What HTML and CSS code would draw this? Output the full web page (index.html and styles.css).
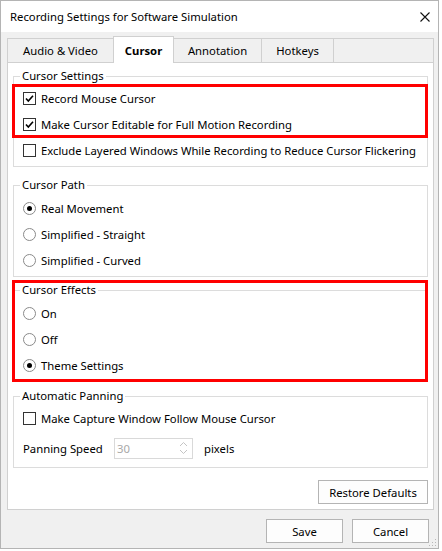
FILE: index.html
```html
<!DOCTYPE html>
<html lang="en">
<head>
    <meta charset="UTF-8">
    <title>Recording Settings for Software Simulation</title>
    <link rel="stylesheet" href="styles.css">
</head>
<body>
    <div class="window">
        <div class="titlebar">
            <span class="title">Recording Settings for Software Simulation</span>
            <svg class="close" width="10" height="10" viewBox="0 0 10 10">
                <path d="M0.5 0.5 L9.5 9.5 M9.5 0.5 L0.5 9.5" stroke="#111" stroke-width="1.1" fill="none"/>
            </svg>
        </div>
        <div class="body">
            <div class="tabs">
                <div class="tab tab-audio">Audio &amp; Video</div>
                <div class="tab active">Cursor</div>
                <div class="tab tab-annotation">Annotation</div>
                <div class="tab tab-hotkeys">Hotkeys</div>
                <div class="tab-fill"></div>
            </div>
            <div class="panel">
                <fieldset class="group group-settings">
                    <legend>Cursor Settings</legend>
                    <div class="row"><span class="check on"><svg width="11" height="11" viewBox="0 0 11 11"><path d="M2 5.5 L4.3 8 L9 2.8" stroke="#000" stroke-width="1.6" fill="none"/></svg></span>Record Mouse Cursor</div>
                    <div class="row"><span class="check on"><svg width="11" height="11" viewBox="0 0 11 11"><path d="M2 5.5 L4.3 8 L9 2.8" stroke="#000" stroke-width="1.6" fill="none"/></svg></span>Make Cursor Editable for Full Motion Recording</div>
                    <div class="row"><span class="check"></span>Exclude Layered Windows While Recording to Reduce Cursor Flickering</div>
                </fieldset>

                <fieldset class="group group-path">
                    <legend>Cursor Path</legend>
                    <div class="row"><span class="radio on"></span>Real Movement</div>
                    <div class="row"><span class="radio"></span>Simplified - Straight</div>
                    <div class="row"><span class="radio"></span>Simplified - Curved</div>
                </fieldset>

                <fieldset class="group group-effects">
                    <legend>Cursor Effects</legend>
                    <div class="row"><span class="radio"></span>On</div>
                    <div class="row"><span class="radio"></span>Off</div>
                    <div class="row"><span class="radio on"></span>Theme Settings</div>
                </fieldset>

                <fieldset class="group group-panning">
                    <legend>Automatic Panning</legend>
                    <div class="row"><span class="check"></span>Make Capture Window Follow Mouse Cursor</div>
                    <div class="row speed">
                        <span class="speed-label">Panning Speed</span>
                        <div class="spin">
                            <span class="spin-value">30</span>
                            <svg class="spin-arrows" width="9" height="16" viewBox="0 0 9 16">
                                <path d="M1 6 L4.5 2.5 L8 6 M1 10 L4.5 13.5 L8 10" stroke="#c4c4c4" stroke-width="1" fill="none"/>
                            </svg>
                        </div>
                        <span>pixels</span>
                    </div>
                </fieldset>

                <div class="panel-foot">
                    <button class="btn btn-restore">Restore Defaults</button>
                </div>

                <!-- red annotation boxes from the screenshot -->
                <div class="mark mark-settings"></div>
                <div class="mark mark-effects"></div>
            </div>
            <div class="foot">
                <button class="btn">Save</button>
                <button class="btn">Cancel</button>
            </div>
        </div>
        <svg class="grip" width="8" height="8" viewBox="0 0 8 8">
            <rect x="6" y="0" width="1" height="1" fill="#b8b8b8"/>
            <rect x="3" y="3" width="1" height="1" fill="#b8b8b8"/>
            <rect x="6" y="3" width="1" height="1" fill="#b8b8b8"/>
            <rect x="0" y="6" width="1" height="1" fill="#b8b8b8"/>
            <rect x="3" y="6" width="1" height="1" fill="#b8b8b8"/>
            <rect x="6" y="6" width="1" height="1" fill="#b8b8b8"/>
        </svg>
    </div>
</body>
</html>
```

FILE: styles.css
```css
body {
    margin: 0;
    background: #ffffff;
    font-family: "Noto Sans", "Open Sans", sans-serif;
    font-size: 11.3px;
    color: #000000;
}
.window {
    position: relative;
    width: 439px;
    height: 549px;
    box-sizing: border-box;
    border: 1px solid #b4b4b4;
    display: flex;
    flex-direction: column;
}
.titlebar {
    height: 31px;
    flex: none;
    background: #ffffff;
    display: flex;
    align-items: center;
    justify-content: space-between;
    padding: 0 8px 0 9px;
}
.close {
    display: block;
}
.body {
    flex: 1;
    background: #f0f0f0;
    padding: 4px 4px 0 6px;
    display: flex;
    flex-direction: column;
}
.tabs {
    height: 26px;
    display: flex;
    align-items: flex-end;
}
.tab {
    height: 24px;
    box-sizing: border-box;
    border-top: 1px solid #d0d0d0;
    border-left: 1px solid #d0d0d0;
    display: flex;
    align-items: center;
    justify-content: center;
    white-space: nowrap;
}
.tab-audio {
    width: 106px;
}
.tab-annotation {
    width: 87px;
}
.tab-hotkeys {
    width: 72px;
}
.tab.active {
    width: 61px;
    height: 27px;
    margin-bottom: -1px;
    background: #ffffff;
    font-weight: bold;
    position: relative;
    z-index: 1;
    border-right: 1px solid #d0d0d0;
}
.tab.active + .tab {
    border-left: none;
}
.tab-fill {
    flex: 1;
    height: 24px;
    box-sizing: border-box;
    border-top: 1px solid #d0d0d0;
    border-left: 1px solid #d0d0d0;
    border-right: 1px solid #d0d0d0;
}
.panel {
    position: relative;
    height: 448px;
    box-sizing: border-box;
    background: #ffffff;
    border: 1px solid #d0d0d0;
    padding: 0 5px;
    display: flex;
    flex-direction: column;
}
.group {
    margin: 0;
    border: 1px solid #dcdcdc;
    padding: 1px 0 3px 6px;
    min-width: 0;
}
.group legend {
    padding: 0 2px;
    line-height: 16px;
}
.group-settings {
    margin-top: 5px;
}
.group-path {
    margin-top: 10px;
    padding-top: 2px;
}
.group-effects {
    margin-top: 5px;
    padding-top: 2px;
}
.group-panning {
    margin-top: 6px;
    padding-bottom: 6px;
}
.row {
    height: 26px;
    display: flex;
    align-items: center;
    padding-left: 3px;
    white-space: nowrap;
}
.check {
    width: 13px;
    height: 13px;
    box-sizing: border-box;
    border: 1px solid #333333;
    margin-right: 5px;
    display: flex;
    align-items: center;
    justify-content: center;
    flex: none;
}
.check svg {
    display: block;
}
.radio {
    width: 13px;
    height: 13px;
    box-sizing: border-box;
    border: 1px solid #8a8a8a;
    border-radius: 50%;
    margin-right: 5px;
    display: flex;
    align-items: center;
    justify-content: center;
    flex: none;
}
.radio.on::after {
    content: "";
    width: 5px;
    height: 5px;
    border-radius: 50%;
    background: #000000;
}
.row.speed {
    margin-top: 4px;
    padding-left: 3px;
}
.speed-label {
    width: 91px;
}
.spin {
    width: 79px;
    height: 21px;
    box-sizing: border-box;
    border: 1px solid #d9d9d9;
    display: flex;
    align-items: center;
    justify-content: space-between;
    padding: 0 4px 0 2px;
    margin-right: 11px;
}
.spin-value {
    color: #a8a8a8;
}
.spin-arrows {
    display: block;
}
.panel-foot {
    margin-top: auto;
    padding-bottom: 5px;
    display: flex;
    justify-content: flex-end;
}
.btn {
    height: 24px;
    box-sizing: border-box;
    border: 1px solid #b4b4b4;
    background: #fdfdfd;
    font-family: inherit;
    font-size: 11.3px;
    color: #000000;
    padding: 0;
}
.btn-restore {
    width: 110px;
}
.foot {
    flex: 1;
    display: flex;
    justify-content: flex-end;
    align-items: flex-start;
    gap: 9px;
    padding: 9px 5px 0 0;
}
.foot .btn {
    width: 77px;
}
.mark {
    position: absolute;
    border: 3px solid #ff0000;
}
.mark-settings {
    left: 4px;
    top: 21px;
    width: 410px;
    height: 48px;
}
.mark-effects {
    left: 4px;
    top: 217px;
    width: 410px;
    height: 96px;
}
.grip {
    position: absolute;
    right: 1px;
    bottom: 1px;
}
```
